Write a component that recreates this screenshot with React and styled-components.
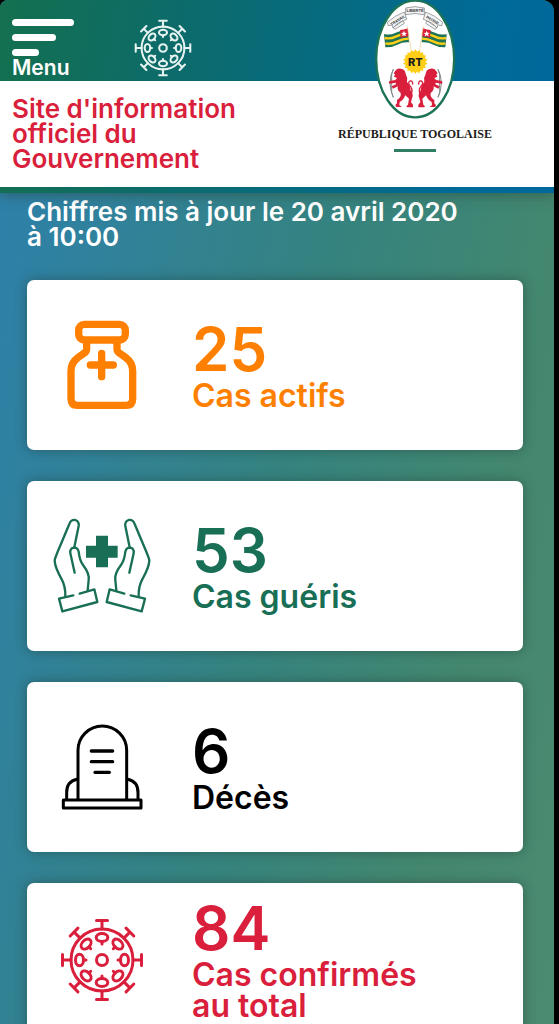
import React from 'react';
import styled, { createGlobalStyle } from 'styled-components';

const stats = [
  { id: 'active', value: 25, label: 'Cas actifs', color: '#ff7f00', Icon: BottleIcon },
  { id: 'healed', value: 53, label: 'Cas guéris', color: '#186f56', Icon: HandsIcon },
  { id: 'deaths', value: 6, label: 'Décès', color: '#000000', Icon: TombIcon },
  { id: 'total', value: 84, label: 'Cas confirmés au total', color: '#d91f3c', Icon: VirusIcon, compact: true },
];

function App () {
  return (
    <>
      <GlobalStyle />
      <Screen>
        <Header>
          <TopBar>
            <MenuButton type='button'>
              <MenuLines>
                <MenuLine $width={62} />
                <MenuLine $width={44} />
                <MenuLine $width={27} />
              </MenuLines>
              Menu
            </MenuButton>
            <HomeLink href='#' aria-label='Coronavirus'>
              <VirusIcon size={58} />
            </HomeLink>
          </TopBar>
          <Banner>
            <SiteTitle>Site d'information officiel du Gouvernement</SiteTitle>
          </Banner>
          <Logo>
            <Emblem />
            <Republic>RÉPUBLIQUE TOGOLAISE</Republic>
            <LogoLine />
          </Logo>
        </Header>
        <Content>
          <Updated>Chiffres mis à jour le 20 avril 2020 à 10:00</Updated>
          <CardList>
            {stats.map(({ id, value, label, color, Icon, compact }) => (
              <Card key={id} $color={color} $compact={compact}>
                <IconBox><Icon size={84} /></IconBox>
                <CardText>
                  <Value>{value}</Value>
                  <Label>{label}</Label>
                </CardText>
              </Card>
            ))}
          </CardList>
        </Content>
      </Screen>
    </>
  );
}

export default App;

function VirusIcon ({ size }) {
  return (
    <svg width={size} height={size} viewBox='-42 -42 84 84' fill='none' stroke='currentColor' strokeWidth='3' strokeLinecap='round' aria-hidden='true'>
      <circle r='31' />
      <circle r='5.5' />
      {[0, 45, 90, 135, 180, 225, 270, 315].map(angle => (
        <g key={angle} transform={`rotate(${angle})`}>
          <path d='M0 -31V-39M-5.5 -39.5H5.5M0 -18V-16' />
          <ellipse cy='-22.5' rx='5.8' ry='4' />
        </g>
      ))}
    </svg>
  );
}

function BottleIcon () {
  return (
    <svg width='72' height='90' viewBox='138 149 216 270' fill='none' stroke='currentColor' strokeWidth='22' strokeLinecap='round' strokeLinejoin='round' aria-hidden='true'>
      <rect x='176' y='162' width='140' height='47' rx='17' />
      <path d='M200 212V236Q200 243 192 249L175 261Q153 277 153 302V385Q153 405 173 405H318Q338 405 338 385V302Q338 277 316 261L299 249Q291 243 291 236V212' />
      <path d='M211 284H280M245 249V319' />
    </svg>
  );
}

function Hand () {
  return (
    <>
      <path d='M76 275Q77 245 64 222Q45 188 44 168Q44 162 60 125L88 58Q93 44 106 46Q118 50 116 64L103 128' />
      <path d='M104 204L91 146Q89 130 103 129Q113 129 116 141Q119 168 129 181Q149 207 146 226L143 257' />
      <path d='M100 272L57 282L67 320L172 292L163 254L119 267' />
    </>
  );
}

function HandsIcon () {
  return (
    <svg width='98' height='96' viewBox='39 40 294 288' fill='none' stroke='currentColor' strokeWidth='7' strokeLinecap='round' strokeLinejoin='round' aria-hidden='true'>
      <Hand />
      <g transform='translate(372 0) scale(-1 1)'><Hand /></g>
      <path d='M168 93H204V123H233V159H204V188H168V159H138V123H168Z' fill='currentColor' stroke='none' />
    </svg>
  );
}

function TombIcon () {
  return (
    <svg width='82' height='88' viewBox='32 25 246 264' fill='none' stroke='currentColor' strokeWidth='9' strokeLinecap='round' strokeLinejoin='round' aria-hidden='true'>
      <rect x='39' y='256' width='233' height='24' />
      <path d='M83 254V107A73 73 0 0 1 229 107V254' />
      <path d='M80 194Q49 200 49 234V254M232 194Q263 200 263 234V254' />
      <path d='M123 109H187M123 141H187M134 173H177' strokeWidth='10' />
    </svg>
  );
}

function Flag () {
  return (
    <>
      <path d='M57 102Q74 107 92 98T128 90L132 127Q114 125 97 134T61 142Z' fill='#1c7355' />
      <path d='M59 114Q76 118 94 109T130 101' fill='none' stroke='#ffce17' strokeWidth='7' />
      <path d='M61 130Q78 134 96 125T131 116' fill='none' stroke='#ffce17' strokeWidth='7' />
      <path d='M105 90Q117 90 128 85L131 109Q119 110 107 114Z' fill='#d91f3c' />
      <path d='M117 92L119.500 98L126 99L121 103L123 109L117 106L111 109L113 103L108 99L114.500 98Z' fill='#ffffff' />
      <path d='M127 78L138 150' stroke='#e9c88d' strokeWidth='2' />
    </>
  );
}

function Lion () {
  return (
    <>
      <path d='M85 208Q65 248 85 292M85 208L80 222V278L85 292' fill='none' stroke='#81888a' strokeWidth='3' />
      <path d='M91 212Q97 204 107 206Q121 207 122 222Q129 233 126 246Q137 258 137 272Q147 285 141 294L138 307L144 314V322H126Q122 319 129 314L132 296L121 286Q116 300 104 306L103 316L111 321H94Q88 316 96 310V300Q110 291 107 279Q96 271 98 259L84 266L80 259L93 253L92 248L74 251Q69 249 74 243L91 240L96 234L87 230L90 223L86 220Z' fill='#d91f3c' />
      <path d='M130 289Q148 275 137 260Q126 248 135 243Q144 241 143 254' fill='none' stroke='#d91f3c' strokeWidth='4' />
    </>
  );
}

function Emblem () {
  const rays = [0, 20, 40, 60, 80, 100, 120, 140, 160, 180, 200, 220, 240, 260, 280, 300, 320, 340];
  return (
    <svg width='82' height='120' viewBox='27 0 246 360' role='img' aria-label='Armoiries du Togo'>
      <ellipse cx='150.500' cy='177' rx='117' ry='175' fill='#ffffff' stroke='#1c7355' strokeWidth='7' />
      <g fill='#f4f4f4' stroke='#6f7577' strokeWidth='2'>
        <path d='M84 83L90 88L118 70L114 62Z' />
        <path d='M216 83L210 88L182 70L186 62Z' />
        <path d='M67 67Q90 46 118 36L125 58Q98 66 84 84L81 75L70 77Z' />
        <path d='M233 67Q210 46 182 36L175 58Q202 66 216 84L219 75L230 77Z' />
        <path d='M122 24Q150 16 178 24V44Q150 37 122 44Z' />
      </g>
      <g fontFamily='"Liberation Sans", sans-serif' fontWeight='700' fontSize='12' fill='#35393b' textAnchor='middle'>
        <text transform='translate(101 64) rotate(-31)'>TRAVAIL</text>
        <text x='150' y='36'>LIBERTÉ</text>
        <text transform='translate(200 64) rotate(31)'>PATRIE</text>
      </g>
      <Flag />
      <g transform='translate(302 0) scale(-1 1)'><Flag /></g>
      <g transform='translate(151 185)' fill='#ffce17'>
        <circle r='31' />
        {rays.map(angle => <path key={angle} d='M-6 -29L0 -37L6 -29Z' transform={`rotate(${angle})`} />)}
      </g>
      <text x='151' y='197' textAnchor='middle' fontFamily='Inter, sans-serif' fontWeight='800' fontSize='33' fill='#1d1d1b'>RT</text>
      <Lion />
      <g transform='translate(304 0) scale(-1 1)'><Lion /></g>
    </svg>
  );
}

const GlobalStyle = createGlobalStyle`
  * {
    box-sizing: border-box;
  }
  body {
    margin: 0;
    background: #000000;
    font-family: Inter, 'Liberation Sans', sans-serif;
    font-weight: 600;
  }
`;

const Screen = styled.div`
  display: flex;
  flex-direction: column;
  height: 100vh;
  margin-right: 5px;
  border-radius: 8px 12px 0 0;
  overflow: hidden;
  background: linear-gradient(102deg, #2d80ae 0%, #35837f 50%, #43876f 78%, #4b8b71 100%);
`;

const Header = styled.header`
  position: relative;
  z-index: 1;
  background: linear-gradient(100deg, #14704f 0%, #0c6b6b 32%, #006a99 85%, #00689b 100%);
  padding-bottom: 6px;
  box-shadow: 0 2px 12px rgba(40, 60, 50, 0.5);
`;

const TopBar = styled.div`
  display: flex;
  align-items: flex-start;
  gap: 60px;
  height: 81px;
  padding: 19px 12px 0;
`;

const MenuButton = styled.button`
  display: flex;
  flex-direction: column;
  align-items: flex-start;
  gap: 4px;
  padding: 0;
  border: 0;
  background: none;
  color: #ffffff;
  font: inherit;
  font-size: 21px;
  line-height: 16px;
  cursor: pointer;
`;

const MenuLines = styled.span`
  display: flex;
  flex-direction: column;
  gap: 8px;
`;

const MenuLine = styled.span`
  width: ${props => props.$width}px;
  height: 7px;
  border-radius: 4px;
  background: #ffffff;
`;

const HomeLink = styled.a`
  display: flex;
  color: #e6f3f1;
`;

const Banner = styled.div`
  padding: 15px 12px;
  min-height: 106px;
  background: #ffffff;
`;

const SiteTitle = styled.h1`
  max-width: 240px;
  margin: 0;
  color: #d91f3c;
  font-size: 26px;
  font-weight: 600;
  line-height: 25px;
`;

/* the seal hangs over both the coloured bar and the white banner */
const Logo = styled.div`
  position: absolute;
  top: 0;
  right: 62px;
  display: flex;
  flex-direction: column;
  align-items: center;
`;

const Republic = styled.p`
  margin: 6px 0 7px;
  color: #1d1d1b;
  font-family: 'Liberation Serif', serif;
  font-size: 12px;
  font-weight: 700;
  line-height: 16px;
  white-space: nowrap;
`;

const LogoLine = styled.span`
  width: 42px;
  height: 3px;
  background: #2f7d62;
`;

const Content = styled.main`
  flex: 1;
  min-height: 0;
  padding: 6px 31px 24px 27px;
  overflow-y: auto;
  scrollbar-width: none;
`;

const Updated = styled.p`
  max-width: 440px;
  margin: 0 0 31px;
  color: #ffffff;
  font-size: 26px;
  line-height: 25px;
`;

const CardList = styled.div`
  display: flex;
  flex-direction: column;
  gap: 31px;
`;

const Card = styled.section`
  display: flex;
  align-items: center;
  gap: 40px;
  min-height: ${props => props.$compact ? 0 : 170}px;
  padding: 15px 80px 15px 25px;
  border-radius: 7px;
  background: #ffffff;
  box-shadow: 0 0 12px rgba(30, 50, 45, 0.45);
  color: ${props => props.$color};
`;

const IconBox = styled.div`
  display: flex;
  flex: 0 0 100px;
  justify-content: center;
`;

const CardText = styled.div`
  min-width: 0;
`;

const Value = styled.p`
  margin: 0;
  font-size: 60px;
  line-height: 61px;
`;

const Label = styled.p`
  margin: 0;
  font-size: 32px;
  line-height: 31px;
`;
